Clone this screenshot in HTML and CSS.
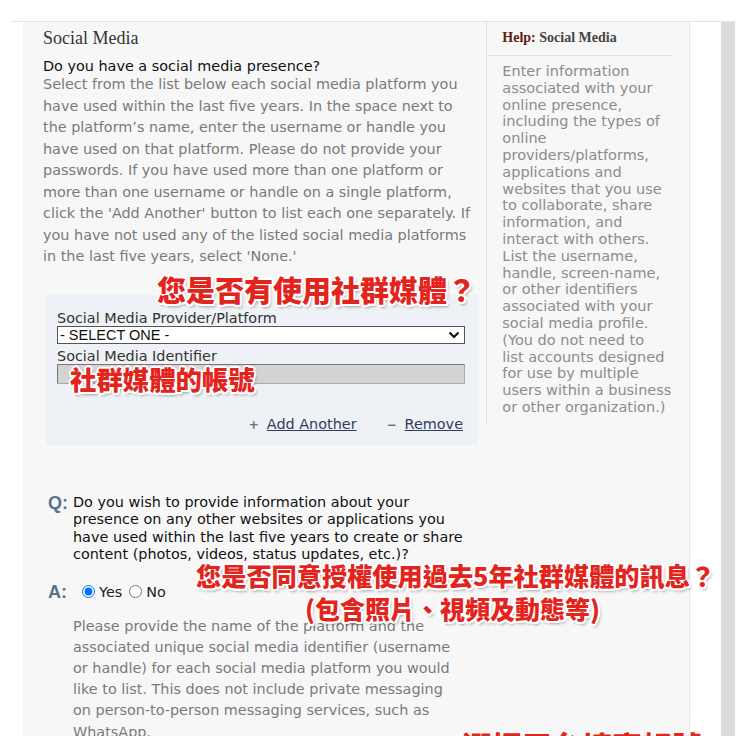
FILE: index.html
```html
<!DOCTYPE html>
<html lang="zh-Hant">
<head>
    <meta charset="UTF-8">
    <meta name="viewport" content="width=device-width, initial-scale=1.0">
    <title>Social Media</title>
    <link rel="stylesheet" href="styles.css">
</head>
<body>
<div class="page">
    <div class="frame">
        <div class="gutter"></div>
        <div class="panel">
            <section class="main">
                <h2 class="title">Social Media</h2>
                <p class="lead">Do you have a social media presence?</p>
                <p class="desc">Select from the list below each social media platform you<br>have used within the last five years. In the space next to<br>the platform’s name, enter the username or handle you<br>have used on that platform. Please do not provide your<br>passwords. If you have used more than one platform or<br>more than one username or handle on a single platform,<br>click the 'Add Another' button to list each one separately. If<br>you have not used any of the listed social media platforms<br>in the last five years, select 'None.'</p>

                <div class="form-box">
                    <label class="field-label">Social Media Provider/Platform</label>
                    <div class="select">
                        <span>- SELECT ONE -</span>
                        <svg width="12" height="8" viewBox="0 0 12 8"><path d="M1.5 1.5 L6 6 L10.5 1.5" fill="none" stroke="#111" stroke-width="2.2"/></svg>
                    </div>
                    <label class="field-label">Social Media Identifier</label>
                    <div class="input"></div>
                    <div class="actions">
                        <a href="#"><span class="ico">+</span><span class="link">Add Another</span></a>
                        <a href="#"><span class="ico">−</span><span class="link">Remove</span></a>
                    </div>
                </div>

                <div class="qa">
                    <span class="qa-key">Q:</span>
                    <p class="q-text">Do you wish to provide information about your<br>presence on any other websites or applications you<br>have used within the last five years to create or share<br>content (photos, videos, status updates, etc.)?</p>
                </div>
                <div class="qa answer">
                    <span class="qa-key">A:</span>
                    <label class="radio"><input type="radio" name="other" checked>Yes</label>
                    <label class="radio"><input type="radio" name="other">No</label>
                </div>
                <p class="desc sub">Please provide the name of the platform and the<br>associated unique social media identifier (username<br>or handle) for each social media platform you would<br>like to list. This does not include private messaging<br>on person-to-person messaging services, such as<br>WhatsApp.</p>
            </section>

            <aside class="help">
                <div class="help-title"><span class="help-key">Help:</span> Social Media</div>
                <p class="help-text">Enter information<br>associated with your<br>online presence,<br>including the types of<br>online<br>providers/platforms,<br>applications and<br>websites that you use<br>to collaborate, share<br>information, and<br>interact with others.<br>List the username,<br>handle, screen-name,<br>or other identifiers<br>associated with your<br>social media profile.<br>(You do not need to<br>list accounts designed<br>for use by multiple<br>users within a business<br>or other organization.)</p>
            </aside>
        </div>
        <div class="spacer"></div>
        <div class="scrollbar"></div>
    </div>

    <!-- anotações -->
    <div class="note note-1">您是否有使用社群媒體？</div>
    <div class="note note-2">社群媒體的帳號</div>
    <div class="note note-3">您是否同意授權使用過去5年社群媒體的訊息？</div>
    <div class="note note-4">(包含照片、視頻及動態等)</div>
    <div class="note note-5">選擇平台填寫帳號</div>
</div>
</body>
</html>
```

FILE: styles.css
```css
body {
    margin: 0;
    background-color: #ffffff;
    font-family: "DejaVu Sans", Verdana, sans-serif;
    color: #333;
}
.page {
    position: relative;
    height: 736px;
    overflow: hidden;
}
.frame {
    display: flex;
    margin-top: 21px;
    margin-left: 11px;
    border-top: 1px solid #e4e4e4;
    height: 714px;
}
.gutter {
    width: 12px;
    background-color: #fff;
}
.panel {
    display: flex;
    align-items: flex-start;
    width: 666px;
    height: 100%;
    background-color: #f7f7f7;
    border-right: 1px solid #e8e8e8;
}
.main {
    width: 444px;
    padding: 5px 0 0 20px;
}
.title {
    margin: 0;
    font-family: "Liberation Serif", serif;
    font-weight: normal;
    font-size: 18px;
    line-height: 22px;
    color: #333;
}
.lead {
    margin: 9px 0 0;
    font-size: 14.4px;
    line-height: 16px;
    color: #111;
    white-space: nowrap;
}
.desc {
    margin: 0;
    font-size: 14.4px;
    line-height: 21.5px;
    color: #7a7a7a;
    white-space: nowrap;
}
.form-box {
    margin: 27px 0 0 3px;
    width: 408px;
    padding: 15px 13px 11px 11px;
    background-color: #eef1f5;
}
.field-label {
    display: block;
    font-size: 14.4px;
    line-height: 16px;
    color: #333;
}
.select {
    display: flex;
    align-items: center;
    justify-content: space-between;
    box-sizing: border-box;
    height: 18px;
    padding: 0 4px 0 2px;
    margin-bottom: 4px;
    background-color: #fff;
    border: 1px solid #555;
    font-family: "Liberation Sans", Arial, sans-serif;
    font-size: 14.5px;
    color: #111;
}
.input {
    box-sizing: border-box;
    height: 20px;
    background-color: #d3d3d3;
    border: 1px solid #777;
    border-color: #777 #aaa #aaa #777;
}
.actions {
    display: flex;
    justify-content: flex-end;
    gap: 30px;
    margin-top: 31px;
    padding-right: 2px;
    line-height: 18px;
    font-size: 14.4px;
}
.actions a {
    color: #2f3d5c;
    text-decoration: none;
}
.actions .link {
    text-decoration: underline;
}
.ico {
    display: inline-block;
    width: 18px;
    color: #6f6f6f;
    font-weight: bold;
    font-size: 12px;
}
.qa {
    display: flex;
    align-items: flex-start;
    margin: 49px 0 0 5px;
}
.qa-key {
    width: 25px;
    font-family: "Liberation Sans", Arial, sans-serif;
    font-weight: bold;
    font-size: 18px;
    line-height: 18px;
    color: #5d7090;
}
.q-text {
    margin: 0;
    font-size: 14.4px;
    line-height: 17.5px;
    color: #111;
    white-space: nowrap;
}
.answer {
    align-items: center;
    margin-top: 17px;
    line-height: 22px;
}
.answer .qa-key {
    width: 34px;
}
.radio {
    display: flex;
    align-items: center;
    margin-right: 7px;
    font-size: 14.4px;
    color: #222;
}
.radio input {
    margin: 0 4px 0 0;
    width: 13px;
    height: 13px;
}
.sub {
    margin: 13px 0 0 30px;
    line-height: 21.2px;
}
.help {
    width: 183px;
    padding: 0 17px 7px 2px;
    border-left: 1px solid #dedede;
}
.help-title {
    padding: 8px 0 9px 13px;
    border-bottom: 1px dotted #cfcfcf;
    font-family: "Liberation Serif", serif;
    font-weight: bold;
    font-size: 14px;
    line-height: 16px;
    color: #444;
}
.help-key {
    color: #5b1d12;
}
.help-text {
    margin: 7px 0 0;
    padding-left: 13px;
    font-size: 14.5px;
    line-height: 16.8px;
    color: #8c8c8c;
    white-space: nowrap;
}
.spacer {
    width: 31px;
    background-color: #fff;
}
.scrollbar {
    width: 14px;
    background-color: #dcdcdc;
}
.note {
    position: absolute;
    font-family: "Noto Sans CJK TC", "Noto Sans CJK SC", sans-serif;
    font-weight: 900;
    line-height: 1;
    color: #e3241d;
    white-space: nowrap;
    text-shadow: 2px 0 0 #fff, -2px 0 0 #fff, 0 2px 0 #fff, 0 -2px 0 #fff,
        1.5px 1.5px 0 #fff, -1.5px -1.5px 0 #fff, 1.5px -1.5px 0 #fff, -1.5px 1.5px 0 #fff,
        2px 3px 3px rgba(0, 0, 0, 0.35);
}
.note-1 {
    left: 157px;
    top: 275px;
    font-size: 29px;
}
.note-2 {
    left: 70px;
    top: 366px;
    font-size: 26.4px;
}
.note-3 {
    left: 196px;
    top: 563px;
    font-size: 25.2px;
}
.note-4 {
    left: 305px;
    top: 596px;
    font-size: 25px;
}
.note-5 {
    left: 462px;
    top: 730px;
    font-size: 30px;
}
```
